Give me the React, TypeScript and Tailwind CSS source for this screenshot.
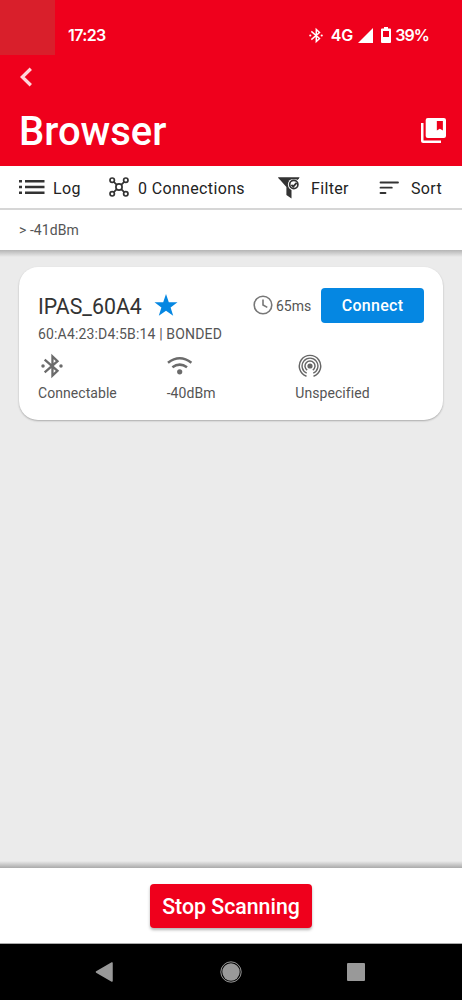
import React from "react";

function BluetoothIcon({ className }: { className: string }) {
  return (
    <svg viewBox="0 0 24 26" className={className} fill="none" stroke="currentColor" strokeWidth="2.5">
      <path d="M4 6 L18 18.2 L12.5 23.4 V2.6 L18 7.8 L4 20" />
      <circle cx="2.2" cy="13" r="1.9" fill="currentColor" stroke="none" />
      <circle cx="21.8" cy="13" r="1.9" fill="currentColor" stroke="none" />
    </svg>
  );
}

function Header() {
  return (
    <header className="relative h-[166px] bg-[#ef001c] text-white">
      <div className="absolute left-0 top-0 h-[55px] w-[55px] bg-[#d91f2b]" />
      <div className="flex h-[70px] items-center pl-[68px] pr-[33px] font-[Inter,sans-serif] text-[16px] font-semibold">
        <span className="w-[40px] whitespace-nowrap tracking-[-0.6px]">17:23</span>
        <BluetoothIcon className="ml-[202px] h-[17px] w-[14px] shrink-0" />
        <span className="ml-[8px] w-[23px] whitespace-nowrap tracking-[-0.2px]">4G</span>
        <svg viewBox="0 0 15 15" className="ml-[5px] h-[15px] w-[15px] shrink-0" fill="currentColor">
          <path d="M15 0V15H0Z" />
        </svg>
        <svg viewBox="0 0 10 16" className="ml-[8px] h-[16px] w-[10px] shrink-0">
          <path fill="currentColor" fillRule="evenodd" d="M3 0H7V1.5H9Q10 1.5 10 2.5V15Q10 16 9 16H1Q0 16 0 15V2.5Q0 1.5 1 1.5H3ZM2 4V10H8V4Z" />
        </svg>
        <span className="ml-[4px] whitespace-nowrap tracking-[-0.9px]">39%</span>
      </div>
      <div className="-mt-[3px] h-[26px] pl-[20px]">
        <svg viewBox="0 0 12 20" className="h-[20px] w-[12px]" fill="none" stroke="#ffd6da" strokeWidth="3.3">
          <path d="M10.8 1.8 L2.3 10 L10.8 18.2" />
        </svg>
      </div>
      <div className="flex h-[74px] items-center justify-between pl-[19px] pr-[16px]">
        <h1 className="pt-[3px] text-[40px] font-medium leading-[74px]">Browser</h1>
        <svg viewBox="0 0 24 24" className="h-[25px] w-[25px]">
          <path fill="currentColor" fillRule="evenodd" d="M6.5 0H22Q24 0 24 2V17.3Q24 19.3 22 19.3H6.5Q4.5 19.3 4.5 17.3V2Q4.5 0 6.5 0ZM15.2 2.8V12L18.1 10.3L21 12V2.8Z" />
          <path fill="currentColor" d="M0 4.8H2.4V21.6H19.2V24H2Q0 24 0 22Z" />
        </svg>
      </div>
    </header>
  );
}

function Toolbar() {
  return (
    <nav className="flex h-[44px] items-center border-b-2 border-[#d6d6d6] bg-white pl-[19px] text-[16px] tracking-[0.35px] text-[#222]">
      <svg viewBox="0 0 26 16" className="h-[16px] w-[26px] shrink-0" fill="#333">
        <path d="M0 1H3V3.5H0ZM0 6.7H3V9.2H0ZM0 12.4H3V15H0ZM6 1H25.5V3.5H6ZM6 6.7H25.5V9.2H6ZM6 12.4H25.5V15H6Z" />
      </svg>
      <span className="ml-[8px] w-[56px] whitespace-nowrap pt-[3px]">Log</span>
      <svg viewBox="0 0 20 20" className="h-[20px] w-[20px] shrink-0" fill="none" stroke="#333" strokeWidth="1.7">
        <circle cx="3.2" cy="3.2" r="2.2" /><circle cx="16.8" cy="3.2" r="2.2" />
        <circle cx="3.2" cy="16.8" r="2.2" /><circle cx="16.8" cy="16.8" r="2.2" />
        <circle cx="10" cy="10" r="3.1" />
        <path d="M4.8 4.8L7.8 7.8M15.2 4.8L12.2 7.8M4.8 15.2L7.8 12.2M15.2 15.2L12.2 12.2" />
      </svg>
      <span className="ml-[9px] w-[140px] whitespace-nowrap pt-[3px]">0 Connections</span>
      <svg viewBox="0 0 22 22" className="mt-[1px] h-[22px] w-[22px] shrink-0">
        <path fill="#333" d="M0 0.5H21.5L13.5 10V21.5L8.4 18V10Z" />
        <circle cx="15.8" cy="7.5" r="5.9" fill="white" />
        <circle cx="15.8" cy="7.5" r="4.1" fill="none" stroke="#333" strokeWidth="1.7" />
        <path d="M13.4 7.8L15.2 9.6L18.6 5.8" fill="none" stroke="#333" strokeWidth="1.9" />
        <path d="M0 0.5H21.5L20.2 2.2H1.5Z" fill="#333" />
      </svg>
      <span className="ml-[11px] w-[68px] whitespace-nowrap pt-[3px]">Filter</span>
      <svg viewBox="0 0 20 14" className="mt-[1px] h-[14px] w-[20px] shrink-0" stroke="#333" strokeWidth="1.8" strokeLinecap="round">
        <path d="M1.5 1.5H19M1.5 6.7H12.8M1.5 12H6.5" />
      </svg>
      <span className="ml-[12px] whitespace-nowrap pt-[3px]">Sort</span>
    </nav>
  );
}

function DeviceCard() {
  return (
    <article className="mx-[19px] mt-[17px] h-[153px] rounded-[19px] bg-white px-[19px] pt-[20px] text-[#555] shadow-[0_1px_2px_rgba(0,0,0,0.28)]">
      <div className="flex h-[36px] items-center">
        <h2 className="w-[116px] whitespace-nowrap pt-[3px] text-[21.3px] leading-[36px] text-[#333]">IPAS_60A4</h2>
        <svg viewBox="0 0 24 22" className="h-[22px] w-[24px] shrink-0" fill="#0587e2">
          <path d="M12 0L14.8 8.2H23.5L16.6 13.4L19.2 21.7L12 16.8L4.8 21.7L7.4 13.4L0.5 8.2H9.2Z" />
        </svg>
        <svg viewBox="0 0 20 20" className="ml-[75px] h-[20px] w-[20px] shrink-0" fill="none" stroke="#777" strokeWidth="1.6">
          <circle cx="10" cy="10" r="8.8" />
          <path d="M10 4.5V10L14.3 12.4" />
        </svg>
        <span className="ml-[3px] w-[45px] whitespace-nowrap pt-[2px] text-[14px]">65ms</span>
        <button className="h-[35px] w-[103px] shrink-0 rounded-[4px] bg-[#0587e2] pt-[2px] text-[16px] font-medium tracking-[0.3px] text-white">Connect</button>
      </div>
      <p className="mt-[1px] h-[20px] whitespace-nowrap text-[14px] leading-[20px] tracking-[0.16px]">60:A4:23:D4:5B:14 | BONDED</p>
      <div className="mt-[9px] grid grid-cols-3 text-[14px] leading-[20px] tracking-[0.06px]">
        <div>
          <BluetoothIcon className="ml-[3px] h-[26px] w-[22px] text-[#6b6b6b]" />
          <p className="mt-[4px]">Connectable</p>
        </div>
        <div>
          <svg viewBox="0 0 26 26" className="h-[26px] w-[26px]" fill="none" stroke="#6b6b6b" strokeWidth="2.6">
            <path d="M1 9.7Q12.7 0.8 24.4 9.7M5.4 14.2Q12.7 8.9 20 14.2" />
            <circle cx="12.7" cy="18.8" r="2.6" fill="#6b6b6b" stroke="none" />
          </svg>
          <p className="mt-[4px]">-40dBm</p>
        </div>
        <div>
          <svg viewBox="0 0 24 26" className="ml-[3px] h-[26px] w-[24px]" fill="none" stroke="#666" strokeWidth="1.45">
            <circle cx="12" cy="13" r="2.6" fill="#666" stroke="none" />
            <path d="M9.2 17.2A5 5 0 1 1 14.8 17.2M8.7 20.2A7.9 7.9 0 1 1 15.3 20.2M8.5 23.2A10.7 10.7 0 1 1 15.5 23.2" />
          </svg>
          <p className="mt-[4px]">Unspecified</p>
        </div>
      </div>
    </article>
  );
}

export default function App() {
  return (
    <div className="flex h-[1000px] w-[462px] flex-col overflow-hidden bg-[#ebebeb] font-[Roboto,sans-serif]">
      <Header />
      <Toolbar />
      <div className="flex h-[40px] items-center bg-white pl-[19px] pt-[1px] text-[14px] tracking-[0.06px] text-[#555]">&gt; -41dBm</div>
      <main className="flex flex-1 flex-col">
        <div className="-mb-[7px] h-[7px] shrink-0 bg-linear-to-b from-[#b5b5b5] to-[#ebebeb]" />
        <DeviceCard />
        <div className="mt-auto h-[7px] bg-linear-to-b from-[#ebebeb] to-[#aaa]" />
      </main>
      <footer className="flex h-[76px] justify-center border-b border-[#aaa] bg-white pt-[16px]">
        <button className="h-[44px] w-[162px] rounded-[4px] bg-[#ef001c] pt-[1px] text-[21.3px] font-medium text-white shadow-[0_2px_3px_rgba(0,0,0,0.3)]">Stop Scanning</button>
      </footer>
      <div className="flex h-[56px] items-center bg-black pl-[95px]">
        <svg viewBox="0 0 18 20" className="h-[20px] w-[18px]">
          <path d="M1.5 10L17 1V19Z" fill="#999" stroke="#999" strokeWidth="1.5" strokeLinejoin="round" />
        </svg>
        <svg viewBox="0 0 22 22" className="ml-[107px] h-[22px] w-[22px]">
          <circle cx="11" cy="11" r="10.2" fill="none" stroke="#999" strokeWidth="1" />
          <circle cx="11" cy="11" r="8.7" fill="#999" />
        </svg>
        <div className="ml-[105px] h-[18px] w-[18px] rounded-[1px] bg-[#999]" />
      </div>
    </div>
  );
}
